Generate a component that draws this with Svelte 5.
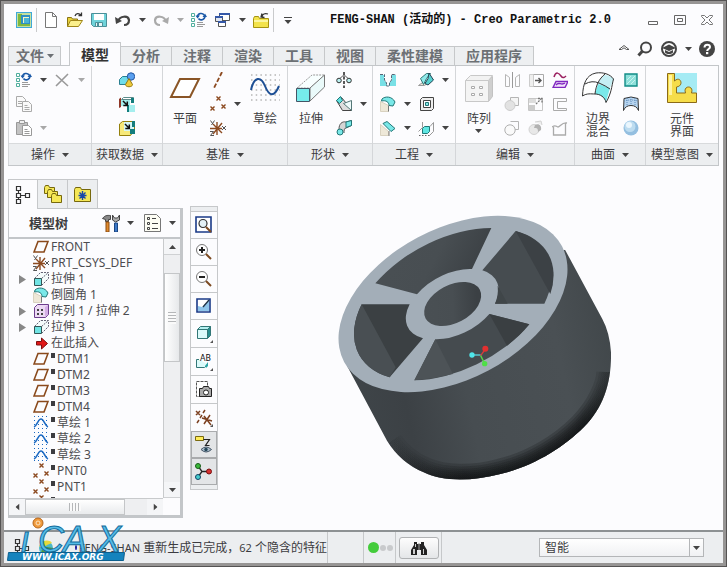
<script>
  const icons = {
    app: '<path fill="#3fa9d8" d="M0 0h16v16H0z"/><path fill="#c5dfa0" d="M1 1h14v14H1z"/><path fill="#7fb83e" d="M2 2h4v9h8v3H2z"/><path fill="#2f8fc4" d="M5 3h9v9H5z"/><path fill="#f3f6c4" d="M7 5h6v6H7z"/><path fill="#4bb5d6" d="M8 6h5v5H8z"/>',
    file: '<path fill="#fff" stroke="#777" d="M2.500.5h7l4 4v11h-11zM9.500.5v4h4"/>',
    open: '<path fill="#e8d23c" stroke="#8a7413" d="M.5 14.500v-9h4l1 1.500h5v2"/><path fill="#fbf08c" stroke="#a08618" d="M.5 14.500l3-6h12l-4 6z"/><path fill="none" stroke="#333" stroke-width="1.300" d="M8 4c1-3 4-3 6-1M14.500.5v3h-3"/>',
    save: '<path fill="#6fd3da" stroke="#4c8f98" d="M.5 1.500h15v13h-13l-2-2z"/><path fill="#fff" d="M3 2h10v6H3z"/><path fill="#e8f7f8" stroke="#4c8f98" d="M4.500 10.500h7v4h-7z"/><path fill="#4c8f98" d="M6 11h2v3H6z"/>',
    undo: '<path fill="none" stroke="#444" stroke-width="2.200" d="M3 9c2-5 10-6 11-1 0 3-2 5-5 5"/><path fill="#444" d="M0 5l1 7 6-3z"/>',
    redo: '<path fill="none" stroke="#aaa" stroke-width="2.200" d="M13 9C11 4 3 3 2 8c0 3 2 5 5 5"/><path fill="#aaa" d="M16 5l-1 7-6-3z"/>',
    regen: '<path fill="none" stroke="#4fae9c" d="M.5 1.500h3v3h-3zM.5 6.500h3v3h-3zM.5 11.500h3v3h-3z"/><path stroke="#999" d="M6 10.500h6M6 12.500h8M6 14.500h6"/><path fill="none" stroke="#1c5aa8" stroke-width="1.600" d="M6.500 5c0-4 5-4.500 6.500-2M14 4c0 4-5 5-6.500 2.500"/><path fill="#1c5aa8" d="M4.500 3.500h4.500l-2.500 3zM11.500 5h4.500l-2-3.500z"/>',
    windows: '<path fill="#fff" stroke="#555" d="M4.500 1.500h10v7h-10z"/><path fill="#3558a8" d="M4 1h11v2H4z"/><path fill="#dfe6f3" stroke="#555" d="M.5 4.500h7v5h-7z"/><path fill="#3558a8" d="M0 4h8v2H0z"/><path fill="#fff" stroke="#555" d="M3.500 9.500h7v5h-7z"/><path fill="#3558a8" d="M3 9h8v2H3z"/>',
    folder: '<path fill="#f3e34b" stroke="#a59310" d="M.5 15.500v-9l1-2h4l1 2h9v9z"/><path fill="#fbf6a0" d="M1 8h14v2H1z"/><path fill="none" stroke="#333" stroke-width="1.300" d="M9 5c0-3 3-4 6-3M9 1.500L8 5l3.500.5"/>',
    customize: '<path fill="#444" d="M4 5h8v1H4zM4.500 8h7L8 12z"/>',
    min: '<path fill="none" stroke="#666" d="M3.500 9.500h9v3h-9z"/>',
    max: '<path fill="none" stroke="#666" d="M2.500 3.500h11v9h-11zM5.500 6.500h5v3h-5z"/>',
    close: '<path fill="none" stroke="#777" d="M2.500 3.500h3L8 6l2.500-2.500h3v1L10 8l3.500 3.500v1h-3L8 10l-2.500 2.500h-3v-1L6 8 2.500 4.500z"/>',
    collapse: '<path fill="#fff" stroke="#555" d="M3 8.500l5-4 5 4H10.500L8 6.800 5.500 8.500z"/>',
    search: '<circle cx="9" cy="6.500" r="5" fill="none" stroke="#444" stroke-width="2"/><path stroke="#444" stroke-width="3" d="M5.500 10L1.500 14.500"/>',
    learn: '<circle cx="8" cy="8" r="7" fill="#fff" stroke="#444" stroke-width="2"/><path fill="#444" d="M1 7l7-3.500L15 7l-7 3zM4 9l4 2 4-2v2.500c-2 2-6 2-8 0z"/>',
    help: '<circle cx="8" cy="8" r="8" fill="#444"/><path fill="none" stroke="#fff" stroke-width="2" d="M5.500 6.500c0-4 5.500-3.500 5.500-.5 0 2-2.800 2-2.800 4"/><path fill="#fff" d="M7 11h2.300v2.200H7z"/>',
    cross: '<path stroke="#999" stroke-width="1.600" d="M2 3l12 11M14 2L2 14"/>',
    copy: '<g fill="#fafafa" stroke="#aaa"><path d="M.5.5h6l3 3v7h-9zM2 5.500h4M2 7.500h4"/><path d="M6.500 5.500h6l3 3v7h-9zM8.500 9.500h3M8.500 11.500h5M8.500 13.500h5"/></g>',
    paste: '<path fill="#c2c2c2" stroke="#999" d="M.5 2.500h11v12H.5z"/><path fill="#eee" stroke="#999" d="M3.500.5h5v3h-5z"/><path fill="#fff" stroke="#999" d="M6.500 5.500h6l3 3v7h-9zM8.500 9.500h3M8.500 11.500h5M8.500 13.500h5"/>',
    udf: '<path fill="#6fdcea" stroke="#2c7f90" d="M.5 7.500l3-3h6v5l-3 3h-6z"/><circle cx="12" cy="4.500" r="3.700" fill="#5aa0f0" stroke="#2456a0"/><path fill="#edc93a" stroke="#94780e" d="M10 6.500l3.500 6c0 3-7 3-7 0z"/>',
    copygeom: '<path fill="#fff" stroke="#5c8a8a" d="M2.500 3.500l2-2h10l-2 2z"/><path fill="#8f3626" d="M0 3l2-1.500V11l-2 1z"/><path fill="#a5eeee" d="M2 4h9v6H2zM10 9h6v7h-6z"/><path fill="#147d7d" d="M12 2h3v5h-3zM8 9h2v7H8z"/><path fill="none" stroke="#111" stroke-width="1.500" d="M4 5l4 4M8.300 5.500v4h-4"/>',
    shrink: '<path fill="#f7e97a" stroke="#94800d" d="M.5 15.500V4l3-2.500h12v8l-4 6z"/><path fill="#d4f6f6" d="M5 2h10v9H5z"/><path fill="#147d7d" d="M13 1h3v6h-3zM11 9h5v5h-5z"/><path fill="none" stroke="#111" stroke-width="1.500" d="M6 4l4 4M10.300 4.500v4h-4"/>',
    axis: '<path stroke="#8c4a20" stroke-width="1.800" stroke-dasharray="4.500 2" d="M12 0L4 16"/>',
    points: '<path stroke="#8c4a20" stroke-width="1.400" d="M6.500.5l4 4M10.500.5l-4 4M.5 10.500l4 4M4.500 10.500l-4 4M11.500 8.500l4 4M15.500 8.500l-4 4"/>',
    csys: '<path stroke="#8c4a20" stroke-width="1.400" d="M0 8.500h12M7 2v13M3 4l9 9M12 3l-9 11"/><path stroke="#555" d="M.5.5l2 3M4.500.5l-3 4.500M12 6l4 4M16 6l-4 4M0 11.500h3.500L.5 15.500H4" fill="none"/>',
    revolve: '<path stroke="#222" stroke-dasharray="3 1.500" stroke-width="1.500" d="M8 0v16"/><circle cx="3" cy="8.500" r="2.300" fill="#baf1f1" stroke="#333"/><circle cx="13" cy="8.500" r="2.300" fill="#baf1f1" stroke="#333"/><path fill="none" stroke="#555" d="M4.500 6c2-3 5-3 7 0"/>',
    sweepblend: '<path fill="#ddd" stroke="#444" d="M.5 4.500l5-3 10 12v1h-9z"/><path fill="#eefafa" stroke="#577" d="M7.500 7.500l8-3v10z"/><path fill="#5fe0e0" stroke="#277" d="M.5 4.500l4-4 2 4-3 3z"/>',
    sweep: '<path fill="#d5d5d5" stroke="#555" d="M3 9c0-5 3-8 7-7l5.500-1.500v5L10 8c-2 0-2 3-2 5"/><path fill="#79e8e8" stroke="#277" d="M10 2l5.500-1.500v5L10 7.500z"/><circle cx="4" cy="12" r="3" fill="#79e8e8" stroke="#277"/>',
    hole: '<path fill="#79e0e6" d="M0 3h4v5l3 3v3H0zM12 3h4v11H9v-3l3-3z"/><path fill="none" stroke="#567" stroke-dasharray="3 1" d="M0 2.500h4.500V8l2 3V14h3v-3l2-3V2.500H16"/>',
    round: '<path fill="#eee8d8" stroke="#d9d2c0" d="M.5 5.500l8 4v6h-8z"/><path fill="#79e8e8" stroke="#277" d="M2 3c3-3 10-3 13 3l-2 4-4-.5C9 6 6 4 1.500 5z"/><path stroke="#777" d="M8.500 9.500v6"/>',
    chamfer: '<path fill="#eee8d8" stroke="#d9d2c0" d="M.5 4.500l8 7v4h-8z"/><path fill="#79e8e8" stroke="#277" d="M3 3.500l4-2 8 7-4 3z"/><path stroke="#777" d="M9 11v5"/>',
    draft: '<path fill="#e8e2d4" stroke="#999" d="M.5 13.500l4-3h6l-4 3z"/><path fill="#8eeaea" stroke="#377" d="M2.500 6.500l6-5h4l-4 5-3 6z"/><path fill="#55d0cf" stroke="#245" d="M11 1l4.500 7-5.500 5-3-1.500 3-5z"/>',
    shell: '<path fill="#eee" stroke="#444" d="M2.500 3.500l2-2h11v11l-2 2h-11z"/><path fill="#fff" stroke="#444" d="M5.500 4.500h7v7h-7z"/><path fill="#8be8e8" stroke="#277" d="M7.500 6.500h3v3h-3z"/>',
    rib: '<path fill="none" stroke="#999" d="M.5 11.500l4-4V2M12 6.500l3.500-4v9l-4 4"/><path fill="#5fe6e2" stroke="#277" d="M4.500 8.500l2-2h5v5l-2 2h-5z"/><path fill="none" stroke="#666" stroke-dasharray="1.500 1.500" d="M1 15.500h11"/>',
    mirror: '<path stroke="#999" d="M8.500 0v16"/><path fill="none" stroke="#b5b5b5" d="M1.500 2.500l4 3v9h-4zM15.500 2.500l-4 3v9h4z"/>',
    extend: '<path fill="#eee" stroke="#ccc" d="M1.500 2.500h4v12h-4z"/><path fill="none" stroke="#aaa" d="M5.500 2.500h10v12h-10"/><path fill="none" stroke="#555" stroke-width="1.400" d="M7 8.500h6M10.500 6l2.500 2.500L10.500 11"/>',
    project: '<path fill="none" stroke="#9b2060" stroke-width="1.500" d="M2 5c2-6 5-4 7-1s4 1 5 0"/><path fill="#f2e5fb" stroke="#8028c0" stroke-width="1.400" d="M1 15.500l3-6h12l-3 6z"/><path fill="none" stroke="#8028c0" stroke-width="1.400" d="M4 13c3-4 5 1 9-2"/>',
    merge: '<path fill="#f5f5f5" stroke="#b5b5b5" d="M6.500 1.500h8v8h-8z"/><circle cx="6" cy="9.500" r="5" fill="#e2e2e2" stroke="#ccc"/>',
    trim: '<path fill="#ddd" d="M1 2h7v5H1z"/><path fill="none" stroke="#c6c6c6" d="M.5 2.500h14v12H.5z"/><path fill="#ccc" d="M1 9h6v5H1z"/><path stroke="#777" stroke-dasharray="2 1" stroke-width="1.300" d="M8 8l5-5M10 2.500h4v4" fill="none"/>',
    offset: '<path fill="none" stroke="#aaa" d="M14.500 2.500H1.500v12h13v-2h-9v-7h9z"/>',
    intersect: '<path fill="none" stroke="#b5b5b5" d="M6.500 1.500h8v8h-4"/><circle cx="6" cy="10" r="5.200" fill="#fafafa" stroke="#b0b0b0"/>',
    thicken: '<circle cx="6" cy="9.500" r="5" fill="#e8e8e8" stroke="#d2d2d2"/><path fill="#b2b2b2" d="M7 5c4-2 7 1 6 5l-3 2c0-4-1-4-4-4z"/><path fill="#efefef" stroke="#d2d2d2" d="M7 2l6-1 1 4"/>',
    solidify: '<path fill="none" stroke="#aaa" stroke-width="1.300" d="M1.500 7v8h12V3M0 7c4-3 4 0 6 0s4-5 9-4"/>',
    fill: '<path fill="#8ee0da" stroke="#118c86" stroke-width="1.400" d="M2 2h12v12H2z"/><path stroke="#c8f4f0" d="M4 12l8-8M4 8l4-4M8 12l4-4"/>',
    style: '<path fill="#b5d3ef" stroke="#333" d="M1 2.500q7-3 14 0l.5 12q-2-5-7.500-5t-7.500 5z"/><path stroke="#5f8cba" stroke-dasharray="1 1" d="M4 2v8M8 1v8M12 2v8M1 5q7-2 14 0" fill="none"/>',
    sphere: '<circle cx="8" cy="8" r="7.500" fill="#94bfe0"/><circle cx="7" cy="6.500" r="5.500" fill="#bddcf0"/><circle cx="6" cy="5" r="3" fill="#eaf6fd"/>',
    globe: '<circle cx="8" cy="8" r="7" fill="#4cb8c8"/><path fill="#e8d83c" d="M1 6c3-6 10-7 13-3l-5 2-4 3z"/><path fill="#4f9a3c" d="M3 11l6-4 6 1c0 5-7 9-12 3z"/>',
    plane: '<path fill="none" stroke="#8a4a1c" stroke-width="1.600" d="M5 2.500h10L11 13H1z"/>',
    bigplane: '<path fill="#fff" stroke="#8a5526" stroke-width="2" d="M11 7h19l-9 18H2z"/>',
    bigsketch: '<path stroke="#b5b5b5" stroke-width="1.500" stroke-dasharray="1.500 3.200" d="M2 3h29M2 8h29M2 13h29M2 18h29M2 23h29M2 28h29"/><path fill="none" stroke="#1d4f95" stroke-width="2" d="M2 18C5 4 12 4 16 14s9 12 14 0"/>',
    bigextrude: '<path fill="#f8ffff" stroke="#999" stroke-dasharray="2 1" d="M2 16L17 3h13L15 16z"/><path fill="#eafafa" stroke="#777" d="M15 16L29.500 3v12L15 29z"/><path fill="#76ebec" stroke="#456" d="M1.500 16.500h13v13h-13z"/>',
    bigpattern: '<path fill="#cfcfcf" stroke="#c2c2c2" d="M25.500 8.500l4-4v20l-4 5z"/><path fill="#f2f2f2" stroke="#c8c8c8" d="M2.500 8.500l5-5h22l-4 5z"/><path fill="#f4f4f4" stroke="#c8c8c8" d="M2.500 8.500h23v21h-23z"/><path fill="#fff" stroke="#aaa" d="M8.500 14.500h3v2h-3zM16.500 14.500h3v2h-3zM8.500 21.500h3v2h-3zM16.500 21.500h3v2h-3z"/>',
    bigblend: '<path fill="#fff" d="M0 24C1 12 4 3 14 1c7-1 14 1 18 6-2 8-2 14-8 24-1-6-6-9-11-9-4 0-8-1-13 2z"/><path fill="#c5eff4" d="M22 3c4 0 8 2 10 4l-4 9-12-4c2-4 4-7 6-9z"/><path fill="#7ae9ea" d="M16 12l12 4-4 14c-2-5-6-8-11-8z"/><path fill="none" stroke="#333" d="M.5 24C1 12 4 3 14 1c7-1 14 1 17.500 6-2 8-2 14-7.500 23.500-1-5.500-6-8.500-11-8.500-4 0-8-1-12.500 2zM13 22C14 13 17 7 23 2M3 12q7-4 14-1t11 6"/>',
    biginterface: '<path fill="#a5ebf4" d="M8 1h23v24H8z"/><path fill="#f6dd4a" stroke="#8b6a18" d="M1.500 1.500h7V9c6-6 10 5 2 6v6h9c-3-8 9-8 6 0h5v9.500h-29z"/><path fill="#fff3a3" d="M3 3h3v20H3z"/>',
    structure: '<path fill="none" stroke="#333" stroke-width="1.200" d="M2.500.5h4v4h-4zM2.500 7.500h4v4h-4zM2.500 13.500h4v4h-4zM11.500 7.500h4v4h-4zM4.500 4.500v3M4.500 11.500v2M6.500 9.500h5"/>',
    folders: '<g fill="#f5e756" stroke="#76680d"><path d="M.5 8.500v-6l1-2h3l1 2h5v6z"/><path d="M3.500 12.500v-6l1-2h3l1 2h5v6z"/><path d="M7.500 17.500v-7l1-2h3l1 2h5v7z"/></g>',
    favorite: '<path fill="#f5e756" stroke="#76680d" d="M.5 16.500v-12l1-2h5l1 2h9v12z"/><path stroke="#1948a8" stroke-width="1.400" d="M8.500 6v9M4.500 10.500h8M5.500 7.500l6 6M11.500 7.500l-6 6"/>',
    tools: '<path fill="#888" stroke="#444" d="M.5 4.500c3-4 6-3 8-3v4H6.500v2h-3v-2z"/><path fill="#e08b2c" stroke="#8b4a10" d="M4 8h3v10H4z"/><path fill="#aaa" stroke="#444" d="M10.500 1v5l3 2 4-2V1l-2 3h-3z"/><path fill="#3c79c8" stroke="#1d4680" d="M12.500 9h3v9h-3z"/>',
    settings: '<path fill="#fdfdf4" stroke="#777" d="M.5.500h12l4 4v13H.5z"/><path fill="none" stroke="#444" d="M3.500 3.500h2v2h-2zM3.500 8.500h2v2h-2zM3.500 13.500h2v2h-2zM8 4.500h4M8 9.500h6M8 14.500h6"/>',
    extrude: '<path fill="#f4fcfc" stroke="#667" stroke-dasharray="2 1" d="M1.500 7.500l6-6h8v6l-7 7M8.500 7.500l7-6"/><path fill="#70e4e4" stroke="#355" d="M1.500 7.500h7v7h-7z"/>',
    pattern: '<path fill="#ecd9f4" stroke="#6c3d8c" d="M1.500 4.500l3-3h11v10l-3 3h-11z"/><path fill="#d4aee6" d="M12 4l3-2v10l-3 2z"/><path fill="#444" d="M4 6h2v2H4zM8 6h2v2H8zM4 10h2v2H4zM8 10h2v2H8z"/>',
    insert: '<path fill="#e01818" stroke="#801010" d="M3.500 6.500h5V3l6 5.500-6 5.500v-4h-5z"/>',
    sketch: '<path stroke="#1c6ac2" stroke-dasharray="1 3" d="M1 1.500h14M1 5.500h14M1 9.500h14M1 13.500h14"/><path fill="none" stroke="#1c6ac2" stroke-width="1.600" d="M1 12c3-1 4-8 7-8s4 7 7 8"/>',
    refit: '<path fill="#fff" stroke="#1a3a88" stroke-width="1.600" d="M1 1h15v15H1z"/><circle cx="8" cy="7.500" r="4" fill="#e4f1f6" stroke="#333" stroke-width="1.200"/><path stroke="#7c4a20" stroke-width="2" d="M11 11l5 5"/>',
    zoomin: '<circle cx="7" cy="7" r="5.500" fill="#fff" stroke="#777"/><path stroke="#222" stroke-width="2" d="M4 7h6M7 4v6"/><path stroke="#7c4a20" stroke-width="2" d="M11 11l5 5"/>',
    zoomout: '<circle cx="7" cy="7" r="5.500" fill="#fff" stroke="#777"/><path stroke="#222" stroke-width="2" d="M4 7h6"/><path stroke="#7c4a20" stroke-width="2" d="M11 11l5 5"/>',
    repaint: '<path fill="#fff" stroke="#1a3a88" stroke-width="1.600" d="M2 2h13v13H2z"/><path fill="#8fc5ea" d="M3 14V9l4 1 7-7v11z"/><path stroke="#234" stroke-width="1.300" d="M14 3l-6 7"/>',
    display: '<path fill="#b4f0f0" stroke="#377" d="M2.500 4.500l3-3h10l-3 3z"/><path fill="#278f8f" stroke="#377" d="M12.500 4.500l3-3v9l-3 3z"/><path fill="#dafafa" stroke="#377" d="M2.500 4.500h10v9h-10z"/>',
    views: '<path fill="#dafafa" stroke="#377" d="M4 6.500H1.500v8h8l3-3"/><path fill="#2aa4a4" d="M10 13l3-4v4l-2 2z"/>',
    camera: '<path fill="#fff" stroke="#555" stroke-dasharray="3 1" d="M1.500.5h11v15h-11z"/><path fill="#aaa" stroke="#222" d="M4.500 7.500h3l1-2h5l1 2h2v8h-12z"/><circle cx="11" cy="11.500" r="2.500" fill="#fff" stroke="#222"/>',
    datums: '<path stroke="#7c4020" stroke-width="1.500" d="M1 2l4 4M5 2L1 6M10 1L8 4M7 6l-2 3M4 11l-2 3M7 9l10 3M9 15l6-9M9 7l7 9"/>',
    annot: '<path fill="#ffec5a" stroke="#7a6a10" d="M.5.5h8v4h-8z"/><path fill="none" stroke="#222" stroke-width="1.200" d="M8.500 3.500h6l-4 6h4"/><path fill="#a9bccb" stroke="#456" d="M6 13.500q5-5 10.500 0-5.500 5-10.500 0z"/><circle cx="11" cy="13.500" r="1.700" fill="#245"/>',
    spin: '<path stroke="#222" stroke-width="1.300" fill="none" d="M3 3l4 5.500L3 14M7 8.500h7"/><circle cx="3" cy="3" r="2.500" fill="#3ab83a" stroke="#175c17"/><circle cx="14" cy="8.500" r="2.500" fill="#d83030" stroke="#761010"/><circle cx="3" cy="14" r="2.500" fill="#4cc" stroke="#146"/>',
    find: '<path fill="#222" d="M3 2h3v2h4V2h3v3l3 5v5h-6v-5H6v5H0v-5l3-5z"/><path fill="#ccc" d="M2 9h2v5H2zM12 9h1v5h-1zM4 4h1v3H4z"/><path stroke="#999" d="M8 3v7"/>'
  };

  const menuTabs = ['模型', '分析', '注释', '渲染', '工具', '视图', '柔性建模', '应用程序'];

  // each group is a list of columns: three icon rows, three arrow rows, or one big button
  const groups = [
    { label: '操作', cols: [
      { icons: ['regen', 'copy', 'paste'] },
      { drops: ['on', '', 'off'] },
      { icons: ['cross', '', ''] },
      { drops: ['off', '', ''] }
    ] },
    { label: '获取数据', cols: [{ icons: ['udf', 'copygeom', 'shrink'] }] },
    { label: '基准', cols: [
      { big: 'bigplane', text: ['平面'] },
      { icons: ['axis', 'points', 'csys'] },
      { drops: ['', 'on', ''] },
      { big: 'bigsketch', text: ['草绘'] }
    ] },
    { label: '形状', cols: [
      { big: 'bigextrude', text: ['拉伸'] },
      { icons: ['revolve', 'sweepblend', 'sweep'] },
      { drops: ['', 'on', ''] }
    ] },
    { label: '工程', cols: [
      { icons: ['hole', 'round', 'chamfer'] },
      { drops: ['', 'on', 'on'] },
      { icons: ['draft', 'shell', 'rib'] },
      { drops: ['on', '', 'on'] }
    ] },
    { label: '编辑', cols: [
      { big: 'bigpattern', text: ['阵列'], drop: true },
      { icons: ['mirror', 'merge', 'intersect'] },
      { icons: ['extend', 'trim', 'thicken'] },
      { icons: ['project', 'offset', 'solidify'] }
    ] },
    { label: '曲面', cols: [
      { big: 'bigblend', text: ['边界', '混合'] },
      { icons: ['fill', 'style', 'sphere'] }
    ] },
    { label: '模型意图', cols: [{ big: 'biginterface', text: ['元件', '界面'] }] }
  ];

  const tree = [
    { icon: 'plane', name: 'FRONT' },
    { icon: 'csys', name: 'PRT_CSYS_DEF' },
    { icon: 'extrude', name: '拉伸 1', children: true },
    { icon: 'round', name: '倒圆角 1' },
    { icon: 'pattern', name: '阵列 1 / 拉伸 2', children: true },
    { icon: 'extrude', name: '拉伸 3', children: true },
    { icon: 'insert', name: '在此插入' },
    { icon: 'plane', name: 'DTM1', hidden: true },
    { icon: 'plane', name: 'DTM2', hidden: true },
    { icon: 'plane', name: 'DTM3', hidden: true },
    { icon: 'plane', name: 'DTM4', hidden: true },
    { icon: 'sketch', name: '草绘 1', hidden: true },
    { icon: 'sketch', name: '草绘 2', hidden: true },
    { icon: 'sketch', name: '草绘 3', hidden: true },
    { icon: 'points', name: 'PNT0', hidden: true },
    { icon: 'points', name: 'PNT1', hidden: true },
    { icon: 'points', name: 'PNT2', hidden: true }
  ];

  const viewTools = [
    { icon: 'refit' },
    { icon: 'zoomin' },
    { icon: 'zoomout' },
    { icon: 'repaint' },
    { icon: 'display', menu: true },
    { icon: 'views', menu: true, text: 'AB' },
    { icon: 'camera', tall: true },
    { icon: 'datums', menu: true },
    { icon: 'annot', pressed: true },
    { icon: 'spin', pressed: true }
  ];

  let activeTab = $state('模型');
  let filter = $state('智能');
</script>

{#snippet icon(name, size = 16)}
  <svg class="icon" width={size} height={size} viewBox="0 0 {size} {size}" aria-hidden="true">{@html icons[name]}</svg>
{/snippet}

{#snippet arrow(off = false)}
  <svg class="arrow" class:off width="7" height="4" viewBox="0 0 7 4" aria-hidden="true"><path d="M0 0h7L3.500 4z" /></svg>
{/snippet}

{#snippet tool(name)}
  <button class="tool" aria-label={name}>{@render icon(name)}</button>
{/snippet}

{#snippet drop(off = false)}
  <button class="drop" aria-label="menu">{@render arrow(off)}</button>
{/snippet}

<div class="frame">
  <div class="window">
    <header class="titlebar">
      <button class="tool" aria-label="app">{@render icon('app')}</button>
      <span class="sep"></span>
      {#each ['file', 'open', 'save', 'undo'] as name}
        {@render tool(name)}
      {/each}
      {@render drop()}
      {@render tool('redo')}
      {@render drop(true)}
      {@render tool('regen')}
      {@render tool('windows')}
      {@render drop()}
      {@render tool('folder')}
      <span class="sep"></span>
      {@render tool('customize')}
      <h1>FENG-SHAN (活动的) - Creo Parametric 2.0</h1>
      <div class="controls">
        {#each ['min', 'max', 'close'] as name}
          {@render tool(name)}
        {/each}
      </div>
    </header>

    <nav class="menu">
      <button class="tab file">文件 {@render arrow()}</button>
      <div class="tabs">
        {#each menuTabs as tab}
          <button class="tab" class:active={activeTab === tab} onclick={() => (activeTab = tab)}>{tab}</button>
        {/each}
      </div>
      <div class="helpers">
        {#each ['collapse', 'search', 'learn'] as name}
          {@render tool(name)}
        {/each}
        {@render drop()}
        {@render tool('help')}
      </div>
    </nav>

    <section class="ribbon">
      {#each groups as group}
        <div class="group">
          <div class="cols">
            {#each group.cols as col}
              {#if col.big}
                <button class="big">
                  {@render icon(col.big, 32)}
                  <span class="big-text">
                    {#each col.text as line}<span>{line}</span>{/each}
                    {#if col.drop}<span class="big-drop">{@render arrow()}</span>{/if}
                  </span>
                </button>
              {:else if col.icons}
                <div class="stack">
                  {#each col.icons as name}
                    {#if name}{@render tool(name)}{/if}
                  {/each}
                </div>
              {:else}
                <div class="stack narrow">
                  {#each col.drops as state}
                    {#if state}{@render drop(state === 'off')}{:else}<span></span>{/if}
                  {/each}
                </div>
              {/if}
            {/each}
          </div>
          <button class="group-label">{group.label} {@render arrow()}</button>
        </div>
      {/each}
    </section>

    <main>
      <aside class="side">
        <div class="side-tabs">
          <button class="active" aria-label="tree">{@render icon('structure', 18)}</button>
          <button aria-label="folders">{@render icon('folders', 18)}</button>
          <button aria-label="favorites">{@render icon('favorite', 18)}</button>
        </div>
        <div class="panel">
          <div class="panel-head">
            <h2>模型树</h2>
            <button class="tool" aria-label="tools">{@render icon('tools', 18)}</button>
            {@render drop()}
            <button class="tool settings" aria-label="settings">{@render icon('settings', 18)}</button>
            {@render drop()}
          </div>
          <div class="tree-box">
            <ul class="tree">
              {#each tree as node}
                <li>
                  <span class="twist">
                    {#if node.children}
                      <svg width="7" height="9" viewBox="0 0 7 9" aria-hidden="true"><path fill="#888" d="M0 0v9l7-4.500z" /></svg>
                    {/if}
                  </span>
                  {@render icon(node.icon)}
                  <span class="name">{#if node.hidden}<i class="mark"></i>{/if}{node.name}</span>
                </li>
              {/each}
            </ul>
            <div class="vscroll">
              <button class="up" aria-label="up">{@render arrow()}</button>
              <div class="track"><div class="thumb"><i></i></div></div>
              <button aria-label="down">{@render arrow()}</button>
            </div>
            <div class="hscroll">
              <button class="left" aria-label="left">{@render arrow()}</button>
              <div class="track"><div class="thumb"><i></i></div></div>
              <button class="right" aria-label="right">{@render arrow()}</button>
            </div>
          </div>
        </div>
      </aside>

      <div class="viewbar">
        {#each viewTools as item}
          <button class:pressed={item.pressed} class:tall={item.menu || item.tall} aria-label={item.icon}>
            <svg width="18" height="18" viewBox="0 0 18 18" aria-hidden="true">
              {@html icons[item.icon]}
              {#if item.text}<text class="ab" x="5" y="8">{item.text}</text>{/if}
              {#if item.menu}<path fill="#555" d="M18 15v3h-3z" />{/if}
            </svg>
          </button>
        {/each}
      </div>

      <div class="canvas">
        <svg width="275" height="266" viewBox="50 48 825 798" role="img" aria-label="FENG-SHAN">
          <defs>
            <linearGradient id="wall" x1="0" y1="0.400" x2="1" y2="0.200">
              <stop offset="0" stop-color="#3f4549" />
              <stop offset="0.180" stop-color="#3c4145" />
              <stop offset="0.400" stop-color="#474d51" />
              <stop offset="0.750" stop-color="#4a5054" />
              <stop offset="1" stop-color="#3f4548" />
            </linearGradient>
            <linearGradient id="pocket" x1="0" y1="0" x2="1" y2="0.300">
              <stop offset="0" stop-color="#4a5054" />
              <stop offset="0.600" stop-color="#484e52" />
              <stop offset="1" stop-color="#3b4044" />
            </linearGradient>
            <linearGradient id="rim" gradientUnits="userSpaceOnUse" x1="190" y1="700" x2="875" y2="560">
              <stop offset="0" stop-color="#0e1011" stop-opacity="0" />
              <stop offset="0.300" stop-color="#0e1011" />
              <stop offset="0.850" stop-color="#0e1011" />
              <stop offset="1" stop-color="#0e1011" stop-opacity="0.300" />
            </linearGradient>
            <clipPath id="body">
              <path d="M80 500L200 725Q240 790 310 820C370 850 460 846 540 825C640 802 730 745 790 685C850 625 874 550 872 460Q868 400 846 360L734 152L398 250Z" />
            </clipPath>
          </defs>
          <g clip-path="url(#body)">
            <path fill="url(#wall)" d="M50 48h830v800H50z" />
            <g fill="none" stroke="url(#rim)" stroke-opacity="0.220">
              {#each [100, 84, 70, 58, 46, 34, 22, 12] as width}
                <path stroke-width={width} d="M200 735Q240 794 310 824C370 850 460 850 540 829C640 806 730 749 790 689C850 629 876 560 878 520" />
              {/each}
            </g>
          </g>
          <ellipse cx="398" cy="315" rx="370" ry="226" fill="#a3aeb8" transform="rotate(-28 398 315)" />
          <path fill="url(#pocket)" d="M165 253A322 197 -28 0 1 513 87L455 210A146 89 -28 0 0 290 286Z" />
          <path fill="#464c50" d="M586 96A322 197 -28 0 1 672 314H524A146 89 -28 0 0 486 214Z" />
          <path fill="#3c4145" d="M586 96A322 197 -28 0 1 690 285Z" />
          <path fill="#404649" d="M532 260L562 314H524Q535 290 532 260Z" />
          <path fill="#454b4f" d="M627 376A322 197 -28 0 1 282 544L345 421A146 89 -28 0 0 507 345Z" />
          <path fill="#4d5357" d="M345 421L398 525Q340 540 282 544Z" />
          <path fill="#3a3f42" d="M507 345L627 376Q600 410 560 440Z" />
          <path fill="#3b4043" d="M208 535A322 197 -28 0 1 124 316H268A146 89 -28 0 0 308 418Z" />
          <path fill="#494f53" d="M124 316L226 505L208 535A322 197 -28 0 1 124 316Z" />
          <ellipse cx="397" cy="315" rx="92" ry="57" fill="url(#pocket)" transform="rotate(-28 397 315)" />
          <path stroke="#5ad6e0" stroke-width="4" d="M455 468h26" />
          <path stroke="#d83a3a" stroke-width="4" d="M481 470l14-20" />
          <path stroke="#58d848" stroke-width="4" d="M481 470l12 24" />
          <circle cx="455" cy="468" r="8" fill="#4fe6ea" />
          <circle cx="495" cy="449" r="9" fill="#e23030" />
          <circle cx="493" cy="494" r="8" fill="#4fe048" />
        </svg>
      </div>
    </main>

    <footer class="status">
      <div class="message">
        <button class="tool" aria-label="tree">{@render icon('structure', 18)}</button>
        <button class="tool" aria-label="browser">{@render icon('globe')}</button>
        <span class="bullet"></span>
        <span class="text"><span class="part">FENG-SHAN</span> 重新生成已完成，<span class="part">62</span> 个隐含的特征</span>
      </div>
      <div class="blank"></div>
      <div class="lights"><i class="go"></i><i></i><i></i></div>
      <div class="finder"><button aria-label="find">{@render icon('find')}</button></div>
      <label class="filter">
        <select bind:value={filter} aria-label="filter">
          <option>智能</option>
        </select>
        <span class="filter-arrow">{@render arrow()}</span>
      </label>
      <svg class="brand" width="120" height="48" viewBox="0 0 120 48" aria-hidden="true">
        <g class="letters">
          <text x="13" y="36">ı</text>
          <text x="31" y="36">C</text>
          <text x="56" y="36">A</text>
          <text x="90" y="36">X</text>
        </g>
        <circle cx="31" cy="7" r="5" fill="#f09a3c" stroke="#b5651a" />
        <circle cx="31" cy="7" r="2" fill="none" stroke="#fbe3c2" />
        <path fill="#1583bd" stroke="#0c5f8e" d="M1.500 36.500h116l-1 8H.5z" />
        <text class="url" x="15" y="44">WWW.ICAX.ORG</text>
      </svg>
    </footer>
  </div>
</div>

<style>
  :global(body) {
    margin: 0;
  }

  .frame {
    box-sizing: border-box;
    height: 100vh;
    padding: 3px;
    border: 1px solid #555353;
    background: #979594;
    font: 12px/16px "Noto Sans", "Noto Sans CJK SC", sans-serif;
    color: #3c3c40;
  }

  .window {
    height: 100%;
    display: flex;
    flex-direction: column;
    background: #fcfcfe;
  }

  button {
    display: flex;
    align-items: center;
    justify-content: center;
    padding: 0;
    border: none;
    background: none;
    font: inherit;
    color: inherit;
  }

  svg {
    display: block;
    flex: none;
  }

  .arrow {
    fill: #444;
  }

  .arrow.off {
    fill: #a8a8a8;
  }

  .tool {
    width: 24px;
    height: 24px;
    flex: none;
  }

  .drop {
    width: 14px;
    height: 24px;
    flex: none;
  }

  .titlebar {
    display: flex;
    align-items: center;
    height: 32px;
    flex: none;
    padding-left: 8px;
  }

  .sep {
    width: 1px;
    height: 24px;
    margin-right: 2px;
    background: #c9cacc;
  }

  h1 {
    margin: 0 auto 0 30px;
    font: bold 12px/16px "Liberation Mono", "Noto Sans CJK SC", monospace;
    color: #111;
    white-space: nowrap;
  }

  .controls {
    display: flex;
    gap: 3px;
    padding-right: 4px;
  }

  .menu {
    display: flex;
    align-items: flex-end;
    height: 29px;
    flex: none;
    padding: 0 4px;
  }

  .tabs {
    display: flex;
    align-items: flex-end;
    margin-left: 8px;
  }

  .tab {
    height: 19px;
    padding: 0 11px;
    border: solid #c6c8ca;
    border-width: 1px 1px 0 0;
    background: #edeff1;
    font-size: 14px;
    font-weight: bold;
    color: #6c7074;
    white-space: nowrap;
    box-sizing: border-box;
  }

  .tab.file {
    gap: 3px;
    padding: 0 6px 0 7px;
    border-left-width: 1px;
  }

  .tab.file .arrow {
    fill: #6c7074;
  }

  .tab.active {
    position: relative;
    height: 24px;
    margin-bottom: -1px;
    border-left-width: 1px;
    background: #fcfcfe;
    color: #333;
  }

  .helpers {
    display: flex;
    align-self: center;
    margin-left: auto;
    padding-bottom: 4px;
  }

  .helpers .tool:first-child {
    width: 18px;
  }

  .ribbon {
    display: grid;
    grid-template-columns: 83fr 71fr 125fr 85fr 83fr 119fr 71fr 73fr;
    margin: 0 4px;
    border: 1px solid #c3c6c9;
    border-width: 1px 1px 1px 0;
    flex: none;
  }

  .group {
    min-width: 0;
    border-left: 1px solid #d4d6d9;
  }

  .cols {
    display: flex;
    justify-content: center;
    height: 77px;
  }

  .stack {
    display: grid;
    grid-template-rows: repeat(3, 24px);
    width: 24px;
    padding-top: 2px;
  }

  .stack.narrow {
    width: 14px;
  }

  .big {
    flex-direction: column;
    justify-content: flex-start;
    gap: 8px;
    width: 42px;
    padding-top: 6px;
    line-height: 13px;
  }

  .big-text {
    display: flex;
    flex-direction: column;
    align-items: center;
  }

  .big-drop {
    padding-top: 4px;
  }

  .group-label {
    gap: 7px;
    width: 100%;
    height: 22px;
    border-top: 1px solid #d8dadc;
    background: #eceef0;
    white-space: nowrap;
  }

  main {
    display: flex;
    flex: 1;
    min-height: 0;
  }

  .side {
    display: flex;
    flex-direction: column;
    width: 175px;
    margin: 13px 7px 12px 4px;
    flex: none;
  }

  .side-tabs {
    display: flex;
    flex: none;
  }

  .side-tabs button {
    width: 30px;
    height: 29px;
    box-sizing: border-box;
    border: solid #c6c8ca;
    border-width: 1px 1px 0 0;
    background: #eceef0;
  }

  .side-tabs .active {
    position: relative;
    margin-bottom: -1px;
    height: 30px;
    border-left-width: 1px;
    background: #fcfcfe;
  }

  .panel {
    display: flex;
    flex-direction: column;
    flex: 1;
    min-height: 0;
    border: 1px solid #c3c6c9;
    border-right: 3px solid #c3c6c9;
    border-bottom-width: 3px;
  }

  .panel-head {
    display: flex;
    align-items: center;
    height: 28px;
    flex: none;
    padding-right: 1px;
    border-bottom: 2px solid #c3c6c9;
  }

  h2 {
    margin: 0 auto 0 20px;
    font-size: 13px;
    line-height: 16px;
    font-weight: bold;
  }

  .settings {
    margin-left: 4px;
  }

  .tree-box {
    display: grid;
    grid-template-columns: minmax(0, 1fr) 17px;
    grid-template-rows: minmax(0, 1fr) 17px;
    flex: 1;
    min-height: 0;
  }

  .tree {
    grid-area: 1 / 1;
    margin: 0;
    padding: 0;
    list-style: none;
    overflow: hidden;
    color: #4c4c50;
  }

  .tree li {
    display: flex;
    align-items: center;
    height: 16px;
    padding-left: 10px;
    white-space: nowrap;
  }

  .twist {
    width: 14px;
  }

  .name {
    margin-left: 2px;
  }

  .mark {
    display: inline-block;
    width: 4px;
    height: 5px;
    margin-right: 2px;
    vertical-align: 5px;
    background: #3c3c40;
  }

  .vscroll {
    display: flex;
    flex-direction: column;
    grid-area: 1 / 2;
    border-left: 1px solid #c8cacc;
    background: #eeeff1;
  }

  .vscroll button {
    height: 16px;
    flex: none;
    background: #f4f5f7;
    border: solid #cfd1d3;
    border-width: 0 0 1px;
  }

  .up .arrow {
    transform: rotate(180deg);
  }

  .track {
    flex: 1;
    min-width: 0;
    min-height: 0;
  }

  .thumb {
    display: flex;
    align-items: center;
    justify-content: center;
    box-sizing: border-box;
    border: 1px solid #c4c6c8;
    background: linear-gradient(90deg, #fff, #e6e8ea);
  }

  .vscroll .track {
    padding-top: 18px;
  }

  .vscroll .thumb {
    height: 89px;
  }

  .thumb i {
    width: 8px;
    height: 12px;
    background: repeating-linear-gradient(#b5b7b9 0 1px, #fafafa 1px 3px);
  }

  .hscroll {
    display: flex;
    grid-area: 2 / 1;
    background: #eeeff1;
    border-top: 1px solid #c8cacc;
  }

  .hscroll button {
    width: 16px;
    flex: none;
    background: #f4f5f7;
  }

  .hscroll .thumb {
    width: 82%;
    height: 16px;
    background: linear-gradient(#fff, #e9ebed);
  }

  .hscroll .thumb i {
    width: 12px;
    height: 8px;
    background: repeating-linear-gradient(90deg, #b5b7b9 0 1px, #fafafa 1px 3px);
  }

  .left .arrow {
    transform: rotate(90deg);
  }

  .right .arrow {
    transform: rotate(-90deg);
  }

  .viewbar {
    align-self: flex-start;
    flex: none;
    width: 26px;
    margin-top: 40px;
    padding: 4px 0;
    border: 1px solid #c6c8ca;
    background: #eceef0;
  }

  .viewbar button {
    width: 100%;
    height: 27px;
    box-sizing: border-box;
    border-top: 1px solid #c6c8ca;
    background: #fcfcfe;
  }

  .viewbar .tall {
    height: 28px;
  }

  .viewbar .pressed {
    border: 1px solid #a9abad;
    background: #e3e5e7;
  }

  .ab {
    font: 8px "DejaVu Sans", sans-serif;
    fill: #111;
  }

  .canvas {
    display: grid;
    place-items: center;
    flex: 1;
    min-width: 0;
    padding-left: 8px;
  }

  .status {
    position: relative;
    display: flex;
    align-items: stretch;
    height: 31px;
    flex: none;
    border-top: 2px solid #8d9193;
    background: #eceef0;
  }

  .message {
    display: flex;
    align-items: center;
    width: 317px;
    padding-left: 6px;
    overflow: hidden;
    white-space: nowrap;
    border-right: 1px solid #c6c8ca;
  }

  .bullet {
    width: 5px;
    height: 5px;
    margin: 0 2px 0 17px;
    border-radius: 50%;
    background: #1c1c9c;
  }

  .part {
    font-size: 11px;
  }

  .blank {
    width: 35px;
    border-right: 1px solid #c6c8ca;
  }

  .lights {
    display: flex;
    align-items: center;
    gap: 1px;
    padding: 0 2px 0 4px;
    border-right: 1px solid #c6c8ca;
  }

  .lights i {
    width: 6px;
    height: 6px;
    border-radius: 50%;
    background: #c8cacc;
  }

  .lights .go {
    width: 11px;
    height: 11px;
    background: #44cc3c;
  }

  .finder {
    display: flex;
    align-items: center;
    padding: 0 2px 0 3px;
    border-right: 1px solid #c6c8ca;
  }

  .finder button {
    width: 40px;
    height: 22px;
    border: 1px solid #b0b2b4;
    border-radius: 3px;
    background: linear-gradient(#fdfdfd, #e4e6e8);
  }

  .filter {
    display: flex;
    align-self: center;
    width: 165px;
    margin: 0 19px 0 auto;
    box-sizing: border-box;
    border: 1px solid #b4b6b8;
    background: linear-gradient(#fff, #f0f1f3);
  }

  select {
    flex: 1;
    height: 17px;
    padding: 0 5px;
    border: none;
    appearance: none;
    background: none;
    font: inherit;
    color: inherit;
  }

  .filter-arrow {
    display: flex;
    align-items: center;
    justify-content: center;
    width: 13px;
    border-left: 1px solid #b4b6b8;
  }

  .brand {
    position: absolute;
    left: 3px;
    bottom: -1px;
  }

  .letters {
    font: italic 36px "Liberation Sans", sans-serif;
    fill: #55bbe6;
    stroke: #136c9c;
    stroke-width: 1px;
  }

  .url {
    font: italic bold 9px "DejaVu Sans", sans-serif;
    fill: #fff;
  }
</style>
